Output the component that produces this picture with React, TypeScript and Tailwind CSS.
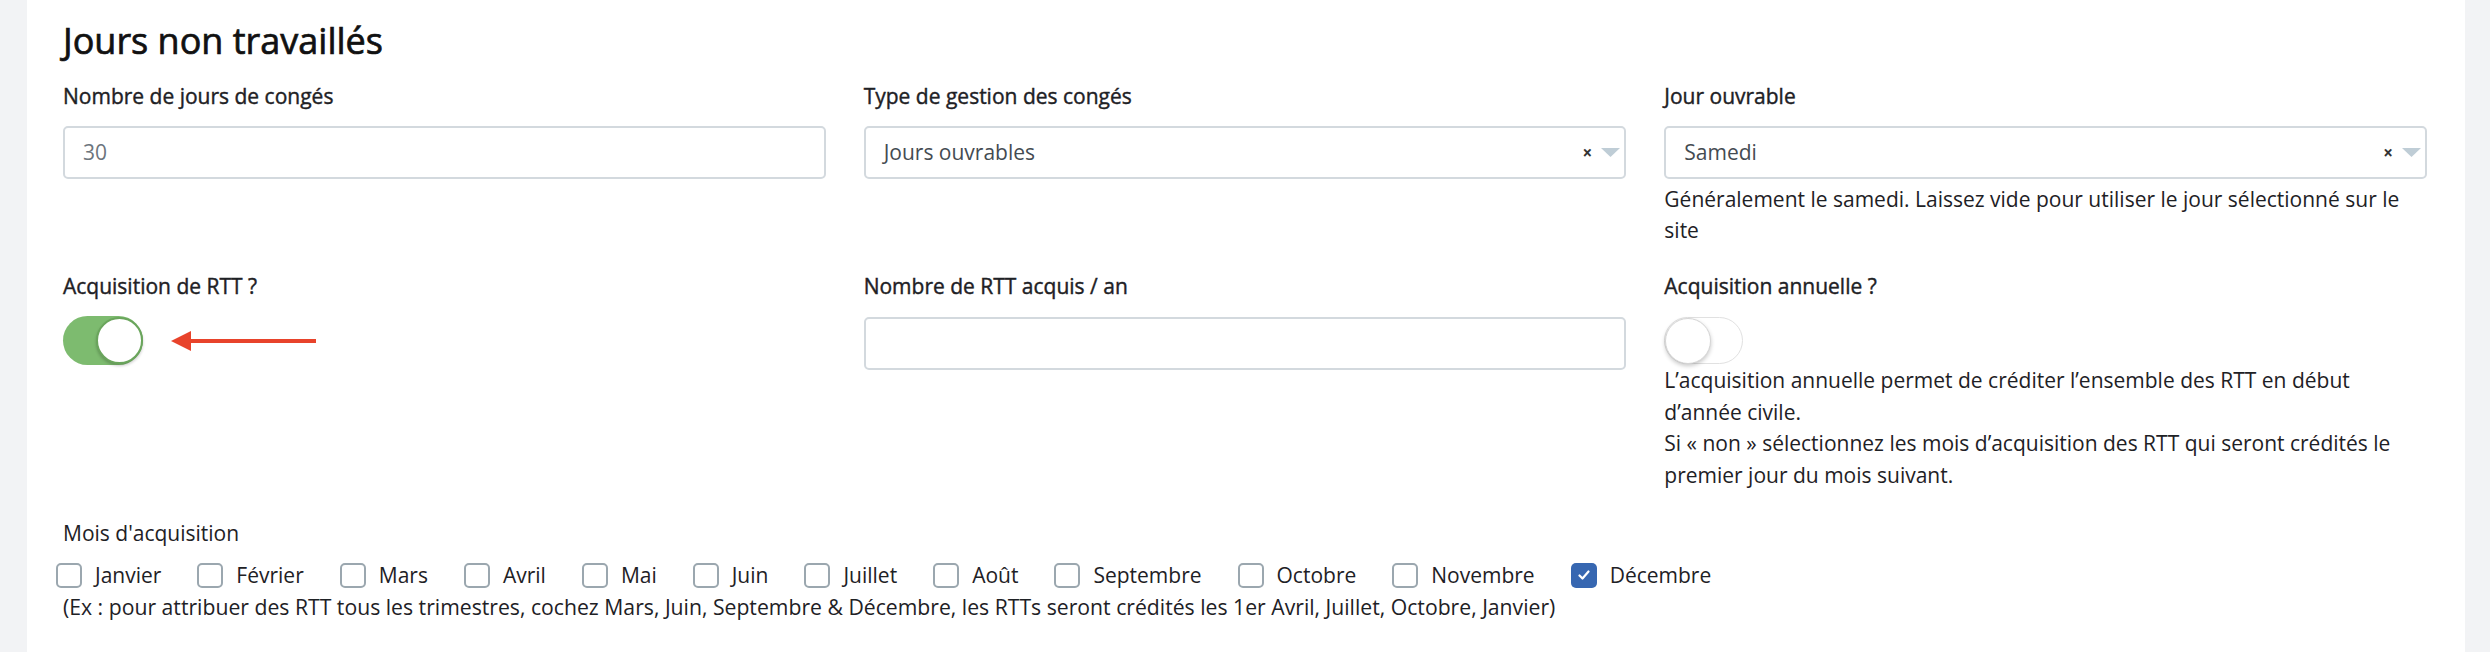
import { useState } from 'react'

const months = ['Janvier','Février','Mars','Avril','Mai','Juin','Juillet','Août','Septembre','Octobre','Novembre','Décembre']

function Toggle({on}: {on: boolean}){
  return on ? (
    <div className="flex h-[49px] w-[80px] items-center justify-end rounded-full bg-[#7dbb6f]">
      <div className="h-[47px] w-[47px] rounded-full border-2 border-[#6aa55c] bg-white shadow-[0_2px_3px_rgba(0,0,0,0.2)]" />
    </div>
  ) : (
    <div className="flex h-[47px] w-[79px] items-center justify-start rounded-full border border-[#e1e1e1] bg-white">
      <div className="h-[46px] w-[46px] rounded-full border border-[#d5d5d5] bg-white shadow-[0_2px_4px_rgba(0,0,0,0.22)]" />
    </div>
  )
}

function Select({value}: {value: string}){
  return (
    <div className="flex h-[53px] items-center rounded-[5px] border-2 border-[#d3d9de] bg-white pl-[18px] pr-[4px]">
      <span className="flex-1 text-[#444b52]">{value}</span>
      <span className="mr-[9px] text-[17px] font-bold leading-none text-[#333]">×</span>
      <svg width="19" height="9" viewBox="0 0 19 9"><path d="M0 0h19L9.5 9z" fill="#bfcdd6" /></svg>
    </div>
  )
}

const label = 'leading-[28px] [-webkit-text-stroke:0.4px_#1e2125]'

export default function App(){
  const [checked] = useState<string[]>(['Décembre'])
  return (
    <div className="flex min-h-[652px] bg-[#f2f3f5] text-[21px] text-[#1e2125]" style={{fontFamily: '"Open Sans", Lato, sans-serif'}}>
      <div className="ml-[27px] w-[2438px] bg-white pl-[36px] pr-[38px] pt-[20px]">
        <h2 className="text-[36px] leading-[42px] text-[#111] [-webkit-text-stroke:0.7px_#111]">Jours non travaillés</h2>

        <div className="mt-[20px] grid grid-cols-3 gap-x-[38px]">
          <div>
            <div className={label}>Nombre de jours de congés</div>
            <div className="mt-[16px] flex h-[53px] items-center rounded-[5px] border-2 border-[#d3d9de] px-[18px] text-[#6c757d]">30</div>
          </div>
          <div>
            <div className={label}>Type de gestion des congés</div>
            <div className="mt-[16px]"><Select value="Jours ouvrables" /></div>
          </div>
          <div>
            <div className={label}>Jour ouvrable</div>
            <div className="mt-[16px]"><Select value="Samedi" /></div>
            <p className="mt-[5px] leading-[31px]">Généralement le samedi. Laissez vide pour utiliser le jour sélectionné sur le site</p>
          </div>
        </div>

        <div className="mt-[26px] grid grid-cols-3 gap-x-[38px]">
          <div>
            <div className={label}>Acquisition de RTT ?</div>
            <div className="mt-[16px] flex items-center">
              <Toggle on />
              <svg className="ml-[28px]" width="145" height="20" viewBox="0 0 145 20">
                <path d="M0 10L20 0v20z" fill="#e8432b" />
                <rect x="18" y="8" width="127" height="4" fill="#e8432b" />
              </svg>
            </div>
          </div>
          <div>
            <div className={label}>Nombre de RTT acquis / an</div>
            <div className="mt-[17px] h-[53px] rounded-[5px] border-2 border-[#d3d9de]" />
          </div>
          <div>
            <div className={label}>Acquisition annuelle ?</div>
            <div className="mt-[17px]"><Toggle on={false} /></div>
            <p className="mt-[1px] leading-[31.5px]">
              L’acquisition annuelle permet de créditer l’ensemble des RTT en début d’année civile.<br />
              Si « non » sélectionnez les mois d’acquisition des RTT qui seront crédités le premier jour du mois suivant.
            </p>
          </div>
        </div>

        <div className="mt-[28px] leading-[28px]">Mois d'acquisition</div>
        <div className="-ml-[7px] mt-[12px] flex items-center gap-x-[36px] leading-[32px]">
          {months.map(m => {
            const on = checked.includes(m)
            return (
              <label key={m} className="flex items-center gap-[13px]">
                {on ? (
                  <span className="flex h-[25px] w-[26px] items-center justify-center rounded-[5px] bg-[#3767b1]">
                    <svg width="12" height="10" viewBox="0 0 12 10"><path d="M1.5 5.5l3 3L10.5 1.5" fill="none" stroke="#fff" strokeWidth="2.2" strokeLinecap="round" strokeLinejoin="round" /></svg>
                  </span>
                ) : (
                  <span className="h-[25px] w-[26px] rounded-[5px] border-2 border-[#9ba7af] bg-white" />
                )}
                <span>{m}</span>
              </label>
            )
          })}
        </div>
        <p className="text-[21.2px] leading-[32px]">(Ex : pour attribuer des RTT tous les trimestres, cochez Mars, Juin, Septembre &amp; Décembre, les RTTs seront crédités les 1er Avril, Juillet, Octobre, Janvier)</p>
      </div>
    </div>
  )
}
